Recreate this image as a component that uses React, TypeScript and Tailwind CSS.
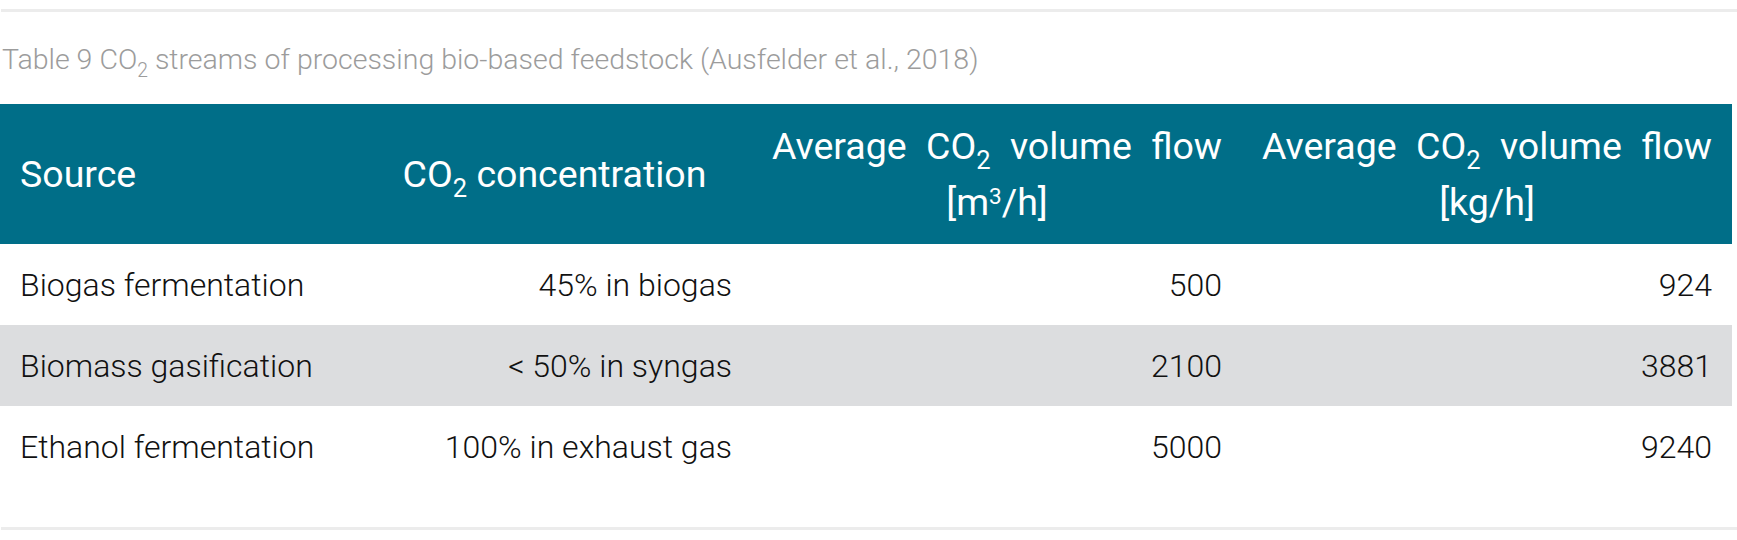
const rows = [
  { source: 'Biogas fermentation', conc: '45% in biogas', vol: '500', mass: '924' },
  { source: 'Biomass gasification', conc: '< 50% in syngas', vol: '2100', mass: '3881' },
  { source: 'Ethanol fermentation', conc: '100% in exhaust gas', vol: '5000', mass: '9240' },
]

function Co2() {
  return (
    <>
      CO<sub className="text-[0.68em] relative top-[0.4em] align-baseline">2</sub>
    </>
  )
}

export default function App() {
  return (
    <div className="w-[1737px] h-[540px] bg-white pt-[9px] font-['Roboto',sans-serif]">
      <div className="h-[3px] ml-px bg-[#ececec]" />

      {/* Caption */}
      <p className="mt-[28px] mb-[24px] pl-[2px] text-[28.5px] leading-[40px] font-light text-[#9c9c9c]">
        Table 9 <Co2 /> streams of processing bio-based feedstock (Ausfelder et al., 2018)
      </p>

      <table className="w-[1732px] table-fixed border-collapse">
        <colgroup>
          <col className="w-[357px]" />
          <col className="w-[395px]" />
          <col className="w-[490px]" />
          <col className="w-[490px]" />
        </colgroup>
        <thead>
          <tr className="h-[140px] bg-[#006e88] text-white text-[37.5px] leading-[1.5] font-normal">
            <th className="px-5 text-left font-normal">Source</th>
            <th className="px-5 font-normal text-justify [text-align-last:center]">
              <Co2 /> concentration
            </th>
            <th className="px-5 font-normal text-justify [text-align-last:center]">
              Average <Co2 /> volume flow [m<sup className="text-[0.6em] relative -top-[0.5em] align-baseline">3</sup>/h]
            </th>
            <th className="px-5 font-normal text-justify [text-align-last:center]">
              Average <Co2 /> volume flow [kg/h]
            </th>
          </tr>
        </thead>
        <tbody className="text-[32px] leading-[1.5] font-light text-[#111]">
          {rows.map((r, i) => (
            <tr key={r.source} className={`h-[81px] ${i === 1 ? 'bg-[#dcdddf]' : 'bg-white'}`}>
              <td className="px-5 text-left">{r.source}</td>
              <td className="px-5 text-right">{r.conc}</td>
              <td className="px-5 text-right">{r.vol}</td>
              <td className="px-5 text-right">{r.mass}</td>
            </tr>
          ))}
        </tbody>
      </table>

      <div className="h-[3px] mt-[40px] ml-px bg-[#ececec]" />
    </div>
  )
}
